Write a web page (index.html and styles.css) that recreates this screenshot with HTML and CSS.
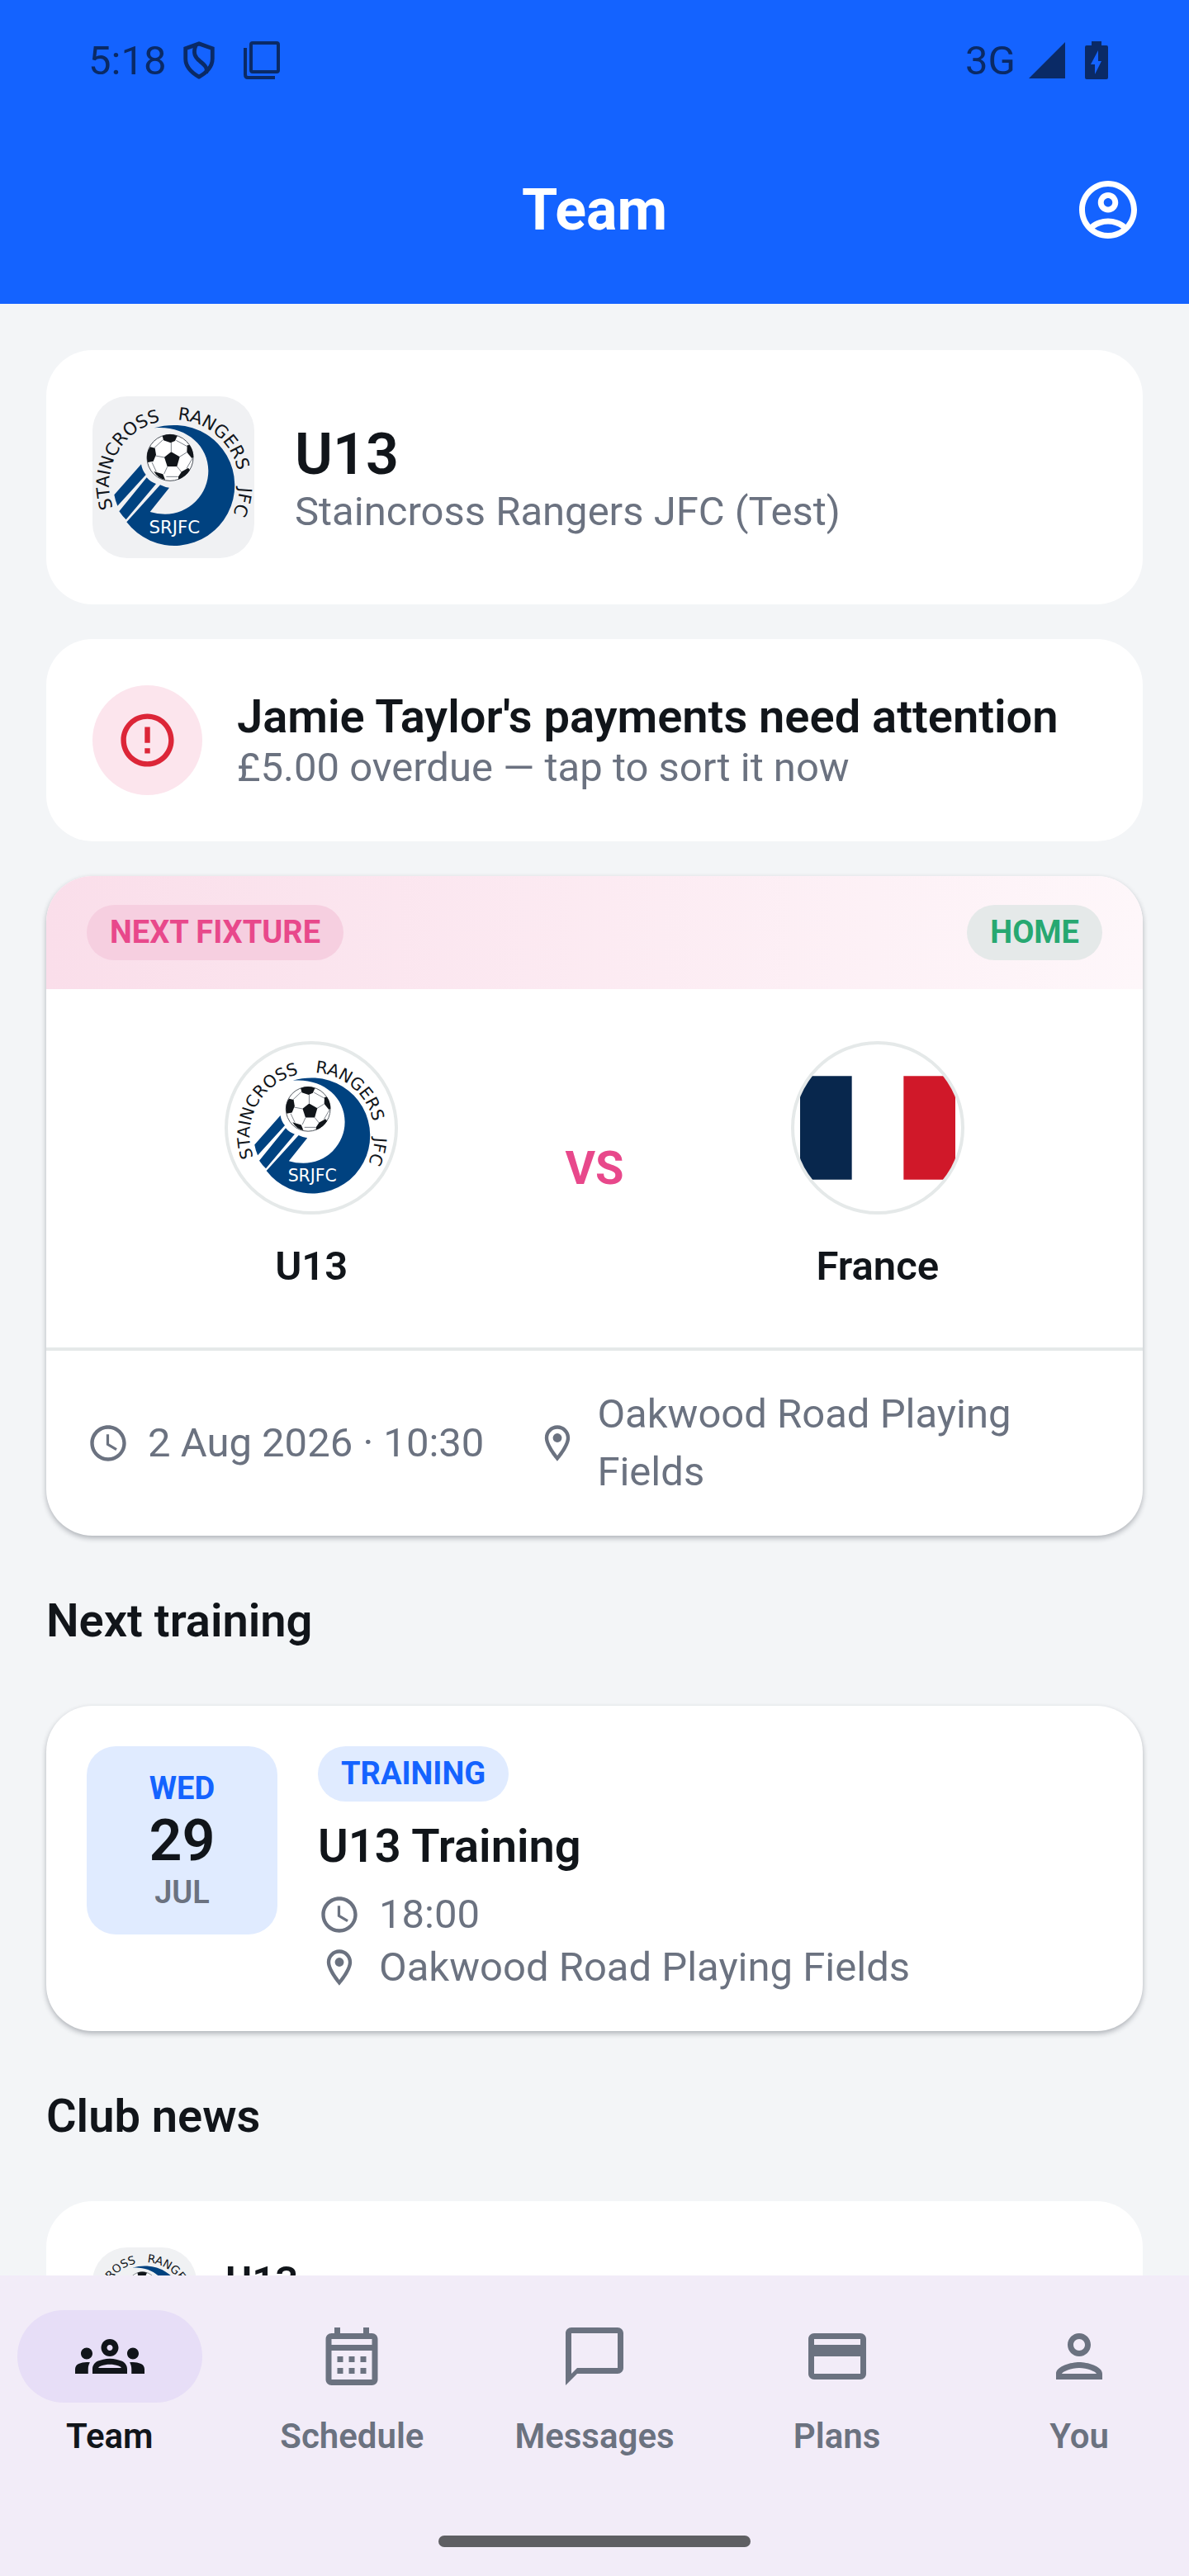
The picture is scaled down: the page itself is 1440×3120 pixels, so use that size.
FILE: index.html
```html
<!DOCTYPE html>
<html lang="en">
<head>
<meta charset="utf-8">
<meta name="viewport" content="width=device-width, initial-scale=1">
<title>Team</title>
<link rel="stylesheet" href="styles.css">
</head>
<body>
<svg class="defs" aria-hidden="true">
  <symbol id="clock" viewBox="0 0 24 24"><path d="M11.99 2C6.47 2 2 6.48 2 12s4.47 10 9.99 10C17.52 22 22 17.52 22 12S17.52 2 11.99 2zM12 20c-4.42 0-8-3.58-8-8s3.58-8 8-8 8 3.58 8 8-3.58 8-8 8zm.5-13H11v6l5.25 3.15.75-1.23-4.5-2.67z"/></symbol>
  <symbol id="pin" viewBox="0 0 24 24"><path d="M12 2C8.13 2 5 5.13 5 9c0 5.25 7 13 7 13s7-7.75 7-13c0-3.87-3.13-7-7-7zM7 9c0-2.76 2.24-5 5-5s5 2.24 5 5c0 2.88-2.88 7.19-5 9.88C9.92 16.21 7 11.85 7 9z"/><circle cx="12" cy="9" r="2.5"/></symbol>
  <symbol id="crest" viewBox="66 60 588 588">
    <path id="ring" fill="none" d="M154 494A237 237 0 1 1 572 494"/>
    <g fill="#004280">
      <path d="M290 175Q330 163 375 165A219 219 0 1 1 190 517L312 382Q330 391 345 392L275 480Q300 488 330 488A157 157 0 0 0 487 331C487 235 400 165 290 175Z"/>
      <path d="M163 478L263 355Q276 371 297 378L188 508Q175 496 163 478Z"/>
      <path d="M145 418L243 307Q247 330 260 345L157 458Q149 440 145 418Z"/>
    </g>
    <circle cx="348" cy="283" r="84" fill="#fff" stroke="#4a5058" stroke-width="3"/>
    <g fill="none" stroke="#7a8088" stroke-width="3"><path d="M352 228v34M382 280l26-16M373 315l16 20M338 316l-12 26M327 282l-32-6M322 218l-32 30M370 220l40 22M282 300l16 34M334 352h42M430 284l-22 38"/></g>
    <g fill="#11151a"><path d="M352 262l31 18-10 35h-35l-11-34z"/><path d="M320 204q28-12 54 0l-8 18-16 7-26-9z"/><path d="M264 276q2-20 12-32l17 4 4 24-10 24-20 4q-4-12-3-24z"/><path d="M410 238l9-1q14 20 14 44l-6 4-18-22z"/><path d="M289 333l33 10 8 20q-26-4-41-30z"/><path d="M378 352l12-18 24-14 6 8q-14 24-42 34z"/></g>
    <g font-family="DejaVu Sans" font-size="64" fill="#11151a" text-anchor="middle">
      <text><textPath href="#ring" startOffset="24%">STAINCROSS</textPath></text>
      <text><textPath href="#ring" startOffset="67%">RANGERS</textPath></text>
      <text><textPath href="#ring" startOffset="94%">JFC</textPath></text>
    </g>
    <text x="364" y="557" font-family="DejaVu Sans" font-size="64" fill="#fff" text-anchor="middle">SRJFC</text>
  </symbol>
</svg>

<header class="top">
  <div class="status">
    <div class="status-group">
      <span>5:18</span>
      <svg class="shield" viewBox="0 0 40 48" fill="none" stroke="currentColor" stroke-width="5"><path d="M20 3L37 9V22C37 33 29 40 20 45C11 40 3 33 3 22V9Z"/><path d="M16 5C12 15 15 20 21 25C29 31 31 35 29 40"/></svg>
      <svg class="copy" viewBox="0 0 44 46" fill="none" stroke="currentColor"><rect x="9" y="2" width="33" height="35" rx="2" stroke-width="4"/><path d="M2 8V40Q2 44 5 44H38" stroke-width="4"/></svg>
    </div>
    <div class="status-group status-right">
      <span>3G</span>
      <svg class="signal" viewBox="0 0 44 44" fill="currentColor"><path d="M44 0V44H0Z"/></svg>
      <svg class="battery" viewBox="0 0 28 46" fill="currentColor"><path fill-rule="evenodd" d="M8 0H20V5H26Q28 5 28 7V44Q28 46 26 46H2Q0 46 0 44V7Q0 5 2 5H8ZM16 11L7 28H12V40L20 24H16Z"/></svg>
    </div>
  </div>
  <div class="bar">
    <h1>Team</h1>
    <button class="profile" type="button" aria-label="Account"><svg viewBox="0 0 24 24"><path d="M12 2C6.48 2 2 6.48 2 12s4.48 10 10 10 10-4.48 10-10S17.52 2 12 2zM7.35 18.5C8.66 17.56 10.26 17 12 17s3.34.56 4.65 1.5C15.34 19.44 13.74 20 12 20s-3.34-.56-4.65-1.5zm10.79-1.38C16.45 15.8 14.32 15 12 15s-4.45.8-6.14 2.12C4.7 15.73 4 13.95 4 12c0-4.42 3.58-8 8-8s8 3.58 8 8c0 1.95-.7 3.73-1.86 5.12z"/><path d="M12 6c-1.93 0-3.5 1.57-3.5 3.5S10.07 13 12 13s3.5-1.57 3.5-3.5S13.93 6 12 6zm0 5c-.83 0-1.5-.67-1.5-1.5S11.17 8 12 8s1.5.67 1.5 1.5S12.83 11 12 11z"/></svg></button>
  </div>
</header>

<main class="content">
  <section class="card team">
    <div class="tile"><svg><use href="#crest"/></svg></div>
    <div>
      <h2 class="big">U13</h2>
      <p class="muted">Staincross Rangers JFC (Test)</p>
    </div>
  </section>

  <a class="card alert" href="#payments">
    <span class="alert-icon"><svg viewBox="0 0 24 24"><path d="M11 15h2v2h-2zm0-8h2v6h-2zm.99-5C6.47 2 2 6.48 2 12s4.47 10 9.99 10C17.52 22 22 17.52 22 12S17.52 2 11.99 2zM12 20c-4.42 0-8-3.58-8-8s3.58-8 8-8 8 3.58 8 8-3.58 8-8 8z"/></svg></span>
    <span class="stack">
      <strong class="title">Jamie Taylor's payments need attention</strong>
      <span class="muted">£5.00 overdue — tap to sort it now</span>
    </span>
  </a>

  <article class="card raised fixture">
    <div class="fixture-head">
      <span class="pill pill-pink">NEXT FIXTURE</span>
      <span class="pill pill-home">HOME</span>
    </div>
    <div class="versus">
      <div class="side">
        <div class="badge"><svg><use href="#crest"/></svg></div>
        <span class="name">U13</span>
      </div>
      <span class="vs">VS</span>
      <div class="side">
        <div class="badge"><svg viewBox="0 0 3 2" class="flag" preserveAspectRatio="xMidYMid meet"><path fill="#08274d" d="M0 0h1v2H0z"/><path fill="#d01829" d="M2 0h1v2H2z"/></svg></div>
        <span class="name">France</span>
      </div>
    </div>
    <div class="fixture-foot">
      <span class="meta"><svg><use href="#clock"/></svg>2 Aug 2026 · 10:30</span>
      <span class="meta meta-fill"><svg><use href="#pin"/></svg><span>Oakwood Road Playing Fields</span></span>
    </div>
  </article>

  <h2 class="heading">Next training</h2>

  <article class="card raised training">
    <div class="date">
      <span class="day">WED</span>
      <span class="num">29</span>
      <span class="month">JUL</span>
    </div>
    <div class="details">
      <span class="pill pill-blue">TRAINING</span>
      <h3 class="title">U13 Training</h3>
      <div class="rows">
        <span class="meta"><svg><use href="#clock"/></svg>18:00</span>
        <span class="meta"><svg><use href="#pin"/></svg>Oakwood Road Playing Fields</span>
      </div>
    </div>
  </article>

  <h2 class="heading">Club news</h2>

  <article class="card news">
    <div class="tile tile-small"><svg><use href="#crest"/></svg></div>
    <span class="name">U13</span>
  </article>
</main>

<footer class="dock">
  <nav class="nav">
    <a class="active" href="#team" aria-current="page"><span class="ind"><svg viewBox="0 0 24 24"><path d="M4 13c1.1 0 2-.9 2-2s-.9-2-2-2-2 .9-2 2 .9 2 2 2zm1.13 1.1c-.37-.06-.74-.1-1.13-.1-.99 0-1.93.21-2.78.58C.48 14.9 0 15.62 0 16.43V18h4.5v-1.61c0-.83.23-1.61.63-2.29zM20 13c1.1 0 2-.9 2-2s-.9-2-2-2-2 .9-2 2 .9 2 2 2zm4 3.43c0-.81-.48-1.53-1.22-1.85-.85-.37-1.79-.58-2.78-.58-.39 0-.76.04-1.13.1.4.68.63 1.46.63 2.29V18H24v-1.57zm-7.76-2.78c-1.17-.52-2.61-.9-4.24-.9-1.63 0-3.07.39-4.24.9C6.68 14.13 6 15.21 6 16.39V18h12v-1.61c0-1.18-.68-2.26-1.76-2.74zM8.07 16c.09-.23.13-.39.91-.69.97-.38 1.99-.56 3.02-.56s2.05.18 3.02.56c.77.3.81.46.91.69H8.07zM12 8c.55 0 1 .45 1 1s-.45 1-1 1-1-.45-1-1 .45-1 1-1m0-2c-1.66 0-3 1.34-3 3s1.34 3 3 3 3-1.34 3-3-1.34-3-3-3z"/></svg></span>Team</a>
    <a href="#schedule"><span class="ind"><svg viewBox="0 0 24 24"><path d="M19 4h-1V2h-2v2H8V2H6v2H5c-1.11 0-1.99.9-1.99 2L3 20c0 1.1.89 2 2 2h14c1.1 0 2-.9 2-2V6c0-1.1-.9-2-2-2zm0 16H5V10h14v10zm0-12H5V6h14v2zM9 14H7v-2h2v2zm4 0h-2v-2h2v2zm4 0h-2v-2h2v2zm-8 4H7v-2h2v2zm4 0h-2v-2h2v2zm4 0h-2v-2h2v2z"/></svg></span>Schedule</a>
    <a href="#messages"><span class="ind"><svg viewBox="0 0 24 24"><path d="M20 2H4c-1.1 0-2 .9-2 2v18l4-4h14c1.1 0 2-.9 2-2V4c0-1.1-.9-2-2-2zm0 14H6l-2 2V4h16v12z"/></svg></span>Messages</a>
    <a href="#plans"><span class="ind"><svg viewBox="0 0 24 24"><path d="M20 4H4c-1.11 0-1.99.89-1.99 2L2 18c0 1.11.89 2 2 2h16c1.11 0 2-.89 2-2V6c0-1.11-.89-2-2-2zm0 14H4v-6h16v6zm0-10H4V6h16v2z"/></svg></span>Plans</a>
    <a href="#you"><span class="ind"><svg viewBox="0 0 24 24"><path d="M12 6c1.1 0 2 .9 2 2s-.9 2-2 2-2-.9-2-2 .9-2 2-2m0 10c2.7 0 5.8 1.29 6 2H6c.23-.72 3.31-2 6-2m0-12C9.79 4 8 5.79 8 8s1.79 4 4 4 4-1.79 4-4-1.79-4-4-4zm0 10c-2.67 0-8 1.34-8 4v2h16v-2c0-2.66-5.33-4-8-4z"/></svg></span>You</a>
  </nav>
  <div class="handle"></div>
</footer>
</body>
</html>
```
FILE: styles.css
```css
* { box-sizing: border-box; }

body {
  margin: 0;
  height: 100vh;
  display: flex;
  flex-direction: column;
  background: #f3f5f7;
  color: #11151a;
  font-family: Roboto, "Liberation Sans", sans-serif;
  font-size: 49px;
  line-height: 57px;
}

h1, h2, h3, p { margin: 0; }
h2, h3 { font-weight: 600; }
a { color: inherit; text-decoration: none; }
svg { display: block; flex: none; fill: currentColor; }
.defs { width: 0; height: 0; position: absolute; }

/* Header */
.top { flex: none; background: #1463ff; color: #fff; }
.status {
  height: 140px;
  padding: 6px 98px 0 107px;
  display: flex;
  justify-content: space-between;
  align-items: center;
  color: #0a2a66;
}
.status-group { display: flex; align-items: center; gap: 20px; }
.status-right { gap: 16px; }
.status .shield, .status .copy, .status .signal, .status .battery { height: 46px; }
.status .shield, .status .copy { fill: none; }
.shield { width: 40px; }
.copy { width: 44px; margin-left: 14px; }
.signal { width: 44px; }
.battery { width: 28px; margin-left: 8px; }
.bar {
  height: 228px;
  padding: 0 56px;
  display: grid;
  grid-template-columns: 1fr auto 1fr;
  align-items: center;
}
.bar h1 { grid-column: 2; font-size: 70px; line-height: 84px; font-weight: 700; }
.profile {
  justify-self: end;
  padding: 0;
  border: 0;
  background: none;
  color: inherit;
}
.profile svg { width: 84px; height: 84px; }

/* Scrolling content */
.content {
  flex: 1;
  min-height: 0;
  overflow-y: auto;
  scrollbar-width: none;
  padding: 56px;
  display: flex;
  flex-direction: column;
  gap: 42px;
}
.card { flex: none; background: #fff; border-radius: 56px; padding: 56px; }
.raised { box-shadow: 0 3px 6px rgba(20, 25, 40, .3); }
.heading { flex: none; font-size: 56px; line-height: 122px; }
.big { font-size: 70px; line-height: 82px; }
.title { font-size: 56px; line-height: 66px; font-weight: 600; }
.muted { color: #6b7280; }
.name { font-weight: 600; }

.team { display: flex; align-items: center; gap: 49px; }
.tile {
  flex: none;
  width: 196px;
  height: 196px;
  border-radius: 42px;
  background: #f0f1f3;
  overflow: hidden;
}
.tile svg { width: 100%; height: 100%; }
.tile-small { width: 126px; height: 126px; }

.alert { display: flex; align-items: center; gap: 42px; }
.stack { display: flex; flex-direction: column; }
.alert-icon {
  flex: none;
  width: 133px;
  height: 133px;
  border-radius: 50%;
  background: #fce5ed;
  color: #dc2638;
  display: grid;
  place-items: center;
}
.alert-icon svg { width: 77px; height: 77px; }

/* Labels */
.pill {
  border-radius: 35px;
  padding: 5px 28px;
  font-size: 38px;
  line-height: 57px;
  font-weight: 700;
}
.pill-pink { background: #f6cfe0; color: #e8488b; }
.pill-home { background: #e5e9e9; color: #27a871; }
.pill-blue { background: #e0ebff; color: #1463ff; }

/* Fixture */
.fixture { padding: 0; overflow: hidden; }
.fixture-head {
  padding: 35px 49px;
  display: flex;
  justify-content: space-between;
  background: linear-gradient(90deg, #fadeea, #fef7fa);
}
.versus { padding: 63px 49px; display: flex; align-items: center; }
.side {
  flex: 1;
  display: flex;
  flex-direction: column;
  align-items: center;
  gap: 28px;
  line-height: 70px;
}
.badge {
  width: 210px;
  height: 210px;
  border: 4px solid #e5e9e9;
  border-radius: 50%;
  overflow: hidden;
  display: grid;
  place-items: center;
}
.badge svg { width: 188px; height: 188px; }
.vs { padding: 0 35px; font-size: 56px; line-height: 66px; font-weight: 700; color: #e8488b; }
.fixture-foot {
  border-top: 4px solid #e5e9e9;
  padding: 42px 49px;
  display: flex;
  align-items: center;
  gap: 63px;
  line-height: 70px;
}
.meta { display: flex; align-items: center; gap: 22px; color: #6b7280; }
.meta svg { width: 52px; height: 52px; }
.meta-fill { flex: 1; }

/* Training */
.training { padding: 49px; display: flex; align-items: flex-start; gap: 49px; }
.date {
  flex: none;
  width: 231px;
  padding: 28px 0;
  border-radius: 35px;
  background: #e0ebff;
  display: flex;
  flex-direction: column;
  align-items: center;
  font-size: 38px;
  line-height: 46px;
}
.day { font-weight: 700; color: #1463ff; }
.num { font-size: 70px; line-height: 80px; font-weight: 600; }
.month { font-weight: 600; color: #6b7280; }
.details { display: flex; flex-direction: column; align-items: flex-start; gap: 21px; }
.rows { display: flex; flex-direction: column; gap: 7px; }

.news { display: flex; align-items: flex-start; gap: 35px; }
.news .name { padding-top: 12px; }

/* Bottom navigation */
.dock {
  flex: none;
  background: #f2ecf8;
  padding-bottom: 35px;
  display: flex;
  flex-direction: column;
  align-items: center;
  gap: 92px;
}
.nav {
  width: 100%;
  padding-top: 42px;
  display: grid;
  grid-template-columns: repeat(5, 1fr);
  column-gap: 28px;
}
.nav a {
  display: flex;
  flex-direction: column;
  align-items: center;
  gap: 13px;
  font-size: 42px;
  line-height: 56px;
  font-weight: 600;
  color: #6b7280;
}
.nav .active { color: #11151a; }
.ind {
  width: 224px;
  height: 112px;
  border-radius: 56px;
  display: grid;
  place-items: center;
}
.active .ind { background: #e7def7; }
.ind svg { width: 84px; height: 84px; }
.handle { width: 378px; height: 14px; border-radius: 7px; background: #5f5f63; }
```
